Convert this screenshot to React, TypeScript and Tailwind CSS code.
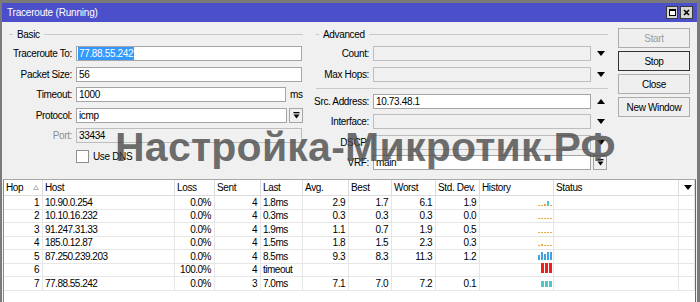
import React from 'react';

type Bar = { h: number; c: string; w: string };

const OR = '#f3a83c';
const TE = '#4cc6c6';
const BL = '#3ea3e2';
const RD = '#f51c1c';

const rows = [
  { hop: '1', host: '10.90.0.254', loss: '0.0%', sent: '4', last: '1.8ms', avg: '2.9', best: '1.7', worst: '6.1', dev: '1.9',
    bars: [{ h: 1, c: OR, w: 'w-[2px]' }, { h: 1, c: OR, w: 'w-[2px]' }, { h: 2, c: OR, w: 'w-[2px]' }, { h: 5, c: TE, w: 'w-[2px]' }, { h: 1, c: OR, w: 'w-[2px]' }] },
  { hop: '2', host: '10.10.16.232', loss: '0.0%', sent: '4', last: '0.3ms', avg: '0.3', best: '0.3', worst: '0.3', dev: '0.0',
    bars: [1, 1, 1, 1, 1].map((h) => ({ h, c: OR, w: 'w-[2px]' })) },
  { hop: '3', host: '91.247.31.33', loss: '0.0%', sent: '4', last: '1.9ms', avg: '1.1', best: '0.7', worst: '1.9', dev: '0.5',
    bars: [1, 1, 1, 1, 1].map((h) => ({ h, c: OR, w: 'w-[2px]' })) },
  { hop: '4', host: '185.0.12.87', loss: '0.0%', sent: '4', last: '1.5ms', avg: '1.8', best: '1.5', worst: '2.3', dev: '0.3',
    bars: [1, 2, 1, 1, 1].map((h) => ({ h, c: OR, w: 'w-[2px]' })) },
  { hop: '5', host: '87.250.239.203', loss: '0.0%', sent: '4', last: '8.5ms', avg: '9.3', best: '8.3', worst: '11.3', dev: '1.2',
    bars: [5, 8, 6, 8, 8].map((h) => ({ h, c: BL, w: 'w-[2px]' })) },
  { hop: '6', host: '', loss: '100.0%', sent: '4', last: 'timeout', avg: '', best: '', worst: '', dev: '',
    bars: [10, 10, 10].map((h) => ({ h, c: RD, w: 'w-[3px]' })) },
  { hop: '7', host: '77.88.55.242', loss: '0.0%', sent: '3', last: '7.0ms', avg: '7.1', best: '7.0', worst: '7.2', dev: '0.1',
    bars: [6, 6, 6].map((h) => ({ h, c: TE, w: 'w-[3px]' })) },
];

function DownArrow() {
  return (
    <svg width="8" height="5" viewBox="0 0 8 5">
      <path d="M0 0H8L4 5Z" fill="#000" />
    </svg>
  );
}

function UpArrow() {
  return (
    <svg width="8" height="5" viewBox="0 0 8 5">
      <path d="M0 5H8L4 0Z" fill="#000" />
    </svg>
  );
}

function DropButton() {
  return (
    <div className="w-[14px] h-[15px] border border-[#a5a5a5] bg-[#f0f0f0] flex items-center justify-center">
      <svg width="7" height="7" viewBox="0 0 7 7">
        <rect x="0.5" y="0" width="6" height="1.3" fill="#000" />
        <path d="M0.5 2.5H6.5L3.5 6.5Z" fill="#000" />
      </svg>
    </div>
  );
}

function Field({ className, value, disabled, children }: { className: string; value?: string; disabled?: boolean; children?: React.ReactNode }) {
  return (
    <div
      className={`${className} shrink-0 h-[15px] border pl-[1px] flex items-center overflow-hidden ${
        disabled ? 'bg-[#f0f0f0] border-[#bdbdbd]' : 'bg-white border-[#a5a5a5]'
      }`}
    >
      {children ?? <span className="pl-px">{value}</span>}
    </div>
  );
}

function FormRow({ label, labelW, muted, children }: { label: string; labelW: string; muted?: boolean; children: React.ReactNode }) {
  return (
    <div className="flex items-center h-[15px]">
      <div
        className={`${labelW} shrink-0 flex justify-end whitespace-nowrap pr-[4px] ${muted ? 'text-[#8e8e8e]' : 'text-black'}`}
      >
        <span className="shrink-0">{label}</span>
      </div>
      {children}
    </div>
  );
}

function GroupTitle({ label, dash }: { label: string; dash: string }) {
  return (
    <div className="flex items-center h-[13px]">
      <div className={`${dash} h-px bg-[#c9c9c9]`} />
      <span className="px-[4px]">{label}</span>
      <div className="flex-1 h-px bg-[#c9c9c9]" />
    </div>
  );
}

function WinButton({ label, disabled, focused }: { label: string; disabled?: boolean; focused?: boolean }) {
  return (
    <div
      className={`h-[20px] flex items-center justify-center bg-[#efefef] border ${
        focused ? 'border-[#333333]' : 'border-[#adadad]'
      } ${disabled ? 'text-[#9c9c9c]' : 'text-black'}`}
    >
      {label}
    </div>
  );
}

const cols = [
  { key: 'hop', title: 'Hop', w: 'w-[39px]', right: true },
  { key: 'host', title: 'Host', w: 'w-[132px]' },
  { key: 'loss', title: 'Loss', w: 'w-[40px]', right: true },
  { key: 'sent', title: 'Sent', w: 'w-[46px]', right: true },
  { key: 'last', title: 'Last', w: 'w-[42px]' },
  { key: 'avg', title: 'Avg.', w: 'w-[46px]', right: true },
  { key: 'best', title: 'Best', w: 'w-[43px]', right: true },
  { key: 'worst', title: 'Worst', w: 'w-[44px]', right: true },
  { key: 'dev', title: 'Std. Dev.', w: 'w-[44px]', right: true },
  { key: 'history', title: 'History', w: 'w-[74px]' },
  { key: 'status', title: 'Status', w: 'w-[125px]' },
  { key: 'menu', title: '', w: 'w-[16px]' },
] as const;

export default function App() {
  return (
    <div className="relative w-[700px] h-[302px] overflow-hidden bg-[#7a7a7a] pt-[3px] pl-[2px] pr-[3px] font-['Liberation_Sans',Arial,sans-serif] text-[10px] leading-[13px] tracking-[-0.35px] text-black">
      <div className="h-full flex flex-col bg-[#f0f0f0]">
        {/* title bar */}
        <div className="h-[19px] shrink-0 bg-[#4b4fc9] flex items-center pl-[5px] pr-[4px]">
          <span className="text-white text-[10px] tracking-[-0.2px]">Traceroute (Running)</span>
          <div className="ml-auto flex gap-[2px]">
            <div className="w-[12px] h-[13px] bg-[#d6d6d6] border border-[#3a3a3a] flex items-center justify-center">
              <div className="w-[7px] h-[7px] bg-white border border-black border-t-2" />
            </div>
            <div className="w-[13px] h-[13px] bg-[#d6d6d6] border border-[#3a3a3a] flex items-center justify-center">
              <svg width="7" height="7" viewBox="0 0 7 7">
                <path d="M1 1L6 6M6 1L1 6" stroke="#000" strokeWidth="1.6" />
              </svg>
            </div>
          </div>
        </div>

        {/* form area */}
        <div className="h-[157px] shrink-0 flex pt-[6px] pl-[7px]">
          {/* Basic */}
          <div className="w-[294px] shrink-0">
            <GroupTitle label="Basic" dash="w-[4px]" />
            <div className="mt-[5px] flex flex-col gap-[5.5px]">
              <FormRow label="Traceroute To:" labelW="w-[67px]">
                <Field className="w-[226px]">
                  <span className="bg-[#3399ff] text-white px-px">77.88.55.242</span>
                </Field>
              </FormRow>
              <FormRow label="Packet Size:" labelW="w-[67px]">
                <Field className="w-[226px]" value="56" />
              </FormRow>
              <FormRow label="Timeout:" labelW="w-[67px]">
                <Field className="w-[210px]" value="1000" />
                <span className="ml-[4px]">ms</span>
              </FormRow>
              <FormRow label="Protocol:" labelW="w-[67px]">
                <Field className="w-[211px]" value="icmp" />
                <div className="ml-[2px]">
                  <DropButton />
                </div>
              </FormRow>
              <FormRow label="Port:" labelW="w-[67px]" muted>
                <Field className="w-[226px]" value="33434" disabled />
              </FormRow>
              <div className="flex items-center h-[15px] pl-[67px]">
                <div className="w-[13px] h-[13px] bg-white border border-[#8f8f8f]" />
                <span className="ml-[4px]">Use DNS</span>
              </div>
            </div>
          </div>

          {/* Advanced */}
          <div className="w-[292px] shrink-0 ml-[13px]">
            <GroupTitle label="Advanced" dash="w-[3px]" />
            <div className="mt-[5px] flex flex-col gap-[5.5px]">
              <FormRow label="Count:" labelW="w-[57px]">
                <Field className="w-[218px]" disabled />
                <div className="ml-[6px]"><DownArrow /></div>
              </FormRow>
              <FormRow label="Max Hops:" labelW="w-[57px]">
                <Field className="w-[218px]" disabled />
                <div className="ml-[6px]"><DownArrow /></div>
              </FormRow>
            </div>
            <div className="mt-[6px] h-px bg-[#c9c9c9]" />
            <div className="mt-[5px] flex flex-col gap-[5.5px]">
              <FormRow label="Src. Address:" labelW="w-[57px]">
                <Field className="w-[218px]" value="10.73.48.1" />
                <div className="ml-[6px]"><UpArrow /></div>
              </FormRow>
              <FormRow label="Interface:" labelW="w-[57px]">
                <Field className="w-[218px]" disabled />
                <div className="ml-[6px]"><DownArrow /></div>
              </FormRow>
              <FormRow label="DSCP:" labelW="w-[57px]">
                <Field className="w-[218px]" disabled />
                <div className="ml-[6px]"><DownArrow /></div>
              </FormRow>
              <FormRow label="VRF:" labelW="w-[57px]">
                <Field className="w-[218px]" value="main" />
                <div className="ml-[2px]">
                  <DropButton />
                </div>
              </FormRow>
            </div>
          </div>

          {/* buttons */}
          <div className="w-[72px] shrink-0 ml-[10px] flex flex-col gap-[3px]">
            <WinButton label="Start" disabled />
            <WinButton label="Stop" focused />
            <WinButton label="Close" />
            <WinButton label="New Window" />
          </div>
        </div>

        {/* table */}
        <div className="flex-1 ml-px w-[693px] bg-white border-t border-l border-r border-t-[#a8a8a8] border-l-[#8a8a8a] border-r-[#6a6a6a]">
          <div className="flex h-[16px] border-b border-[#dcdcdc]">
            {cols.map((c) => (
              <div key={c.key} className={`${c.w} shrink-0 border-r border-[#dcdcdc] flex items-center pl-[2px]`}>
                {c.key === 'hop' ? (
                  <div className="flex items-center w-full pr-[3px]">
                    <span>Hop</span>
                    <svg className="ml-auto" width="6" height="5" viewBox="0 0 6 5">
                      <path d="M0.5 4.5H5.5L3 0.5Z" fill="none" stroke="#b5b5b5" strokeWidth="1" />
                    </svg>
                  </div>
                ) : c.key === 'menu' ? (
                  <div className="w-full flex justify-center">
                    <DownArrow />
                  </div>
                ) : (
                  <span className="whitespace-nowrap">{c.title}</span>
                )}
              </div>
            ))}
          </div>
          {rows.map((r) => (
            <div key={r.hop} className="flex h-[13.5px] border-b border-[#e6e6e6] tracking-[-0.5px]">
              {cols.map((c) => {
                if (c.key === 'history') {
                  return (
                    <div key={c.key} className={`${c.w} shrink-0 border-r border-[#e6e6e6] flex items-end justify-end gap-px pr-px pb-[3px]`}>
                      {r.bars.map((b: Bar, i: number) => (
                        <div key={i} className={b.w} style={{ height: b.h, backgroundColor: b.c }} />
                      ))}
                    </div>
                  );
                }
                const v = c.key === 'status' || c.key === 'menu' ? '' : (r as Record<string, unknown>)[c.key] as string;
                return (
                  <div
                    key={c.key}
                    className={`${c.w} shrink-0 border-r border-[#e6e6e6] flex items-center whitespace-nowrap ${
                      'right' in c && c.right ? 'justify-end pr-[3px]' : 'pl-[2px]'
                    }`}
                  >
                    {v}
                  </div>
                );
              })}
            </div>
          ))}
        </div>
      </div>

      {/* watermark */}
      <div className="absolute left-[115px] top-[127px] text-[41px] leading-[41px] font-bold tracking-[0.25px] text-[rgba(72,72,72,0.8)] whitespace-nowrap pointer-events-none">
        Настройка-Микротик.РФ
      </div>
    </div>
  );
}
